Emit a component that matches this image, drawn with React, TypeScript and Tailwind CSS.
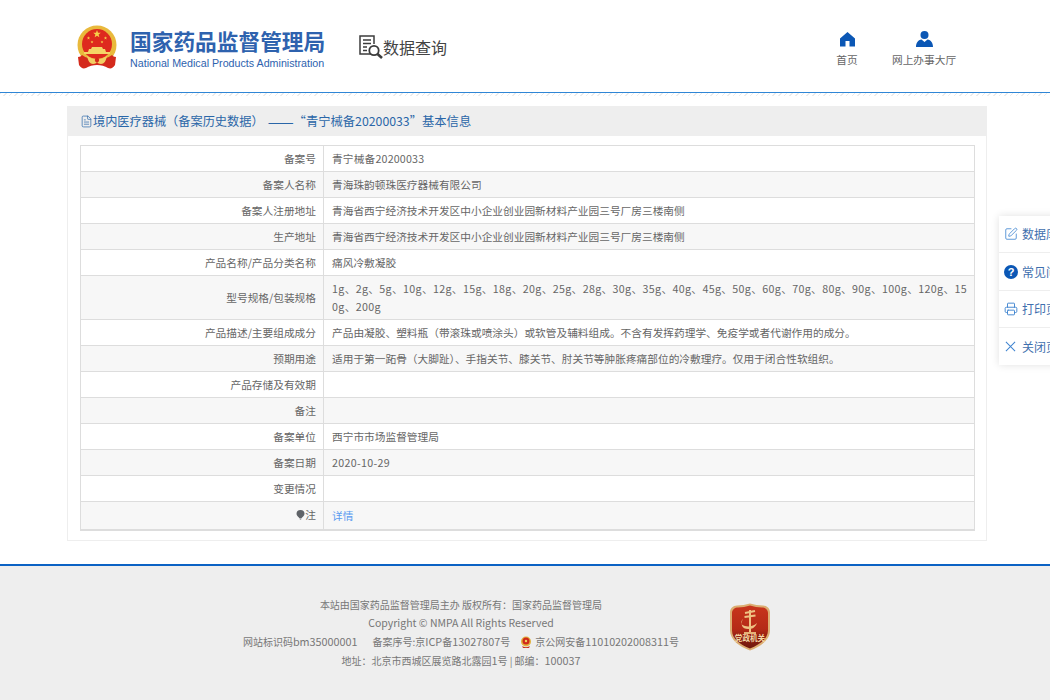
import React from "react";
import { SquarePen, Printer, FileText } from "lucide-react";

const CJK = '"Noto Sans CJK SC", "Liberation Sans", sans-serif';

function Latin({ text, cls }: { text: string; cls: string }) {
  const parts = text.split(/([0-9A-Za-z\-]+)/);
  return (
    <>
      {parts.map((p, i) => (i % 2 ? <span key={i} className={cls}>{p}</span> : <React.Fragment key={i}>{p}</React.Fragment>))}
    </>
  );
}

const rows: [string, string, string?, string?][] = [
  ["备案号", "青宁械备20200033", undefined, "tracking-[0.17px]"],
  ["备案人名称", "青海珠韵顿珠医疗器械有限公司"],
  ["备案人注册地址", "青海省西宁经济技术开发区中小企业创业园新材料产业园三号厂房三楼南侧"],
  ["生产地址", "青海省西宁经济技术开发区中小企业创业园新材料产业园三号厂房三楼南侧"],
  ["产品名称/产品分类名称", "痛风冷敷凝胶"],
  ["型号规格/包装规格", "1g、2g、5g、10g、12g、15g、18g、20g、25g、28g、30g、35g、40g、45g、50g、60g、70g、80g、90g、100g、120g、150g、200g", "h-[44px]", "tracking-[0.34px]"],
  ["产品描述/主要组成成分", "产品由凝胶、塑料瓶（带滚珠或喷涂头）或软管及辅料组成。不含有发挥药理学、免疫学或者代谢作用的成分。"],
  ["预期用途", "适用于第一跖骨（大脚趾）、手指关节、膝关节、肘关节等肿胀疼痛部位的冷敷理疗。仅用于闭合性软组织。"],
  ["产品存储及有效期", ""],
  ["备注", ""],
  ["备案单位", "西宁市市场监督管理局"],
  ["备案日期", "2020-10-29", undefined, "tracking-[0.3px]"],
  ["变更情况", ""],
];

function Star({ x, y, r }: { x: number; y: number; r: number }) {
  const pts = Array.from({ length: 10 }, (_, i) => {
    const a = -Math.PI / 2 + (i * Math.PI) / 5;
    const q = i % 2 ? r * 0.42 : r;
    return `${(x + q * Math.cos(a)).toFixed(2)},${(y + q * Math.sin(a)).toFixed(2)}`;
  }).join(" ");
  return <polygon points={pts} fill="#f6d14a" />;
}

function Emblem() {
  return (
    <svg width="40" height="45" viewBox="0 0 40 45">
      <circle cx="20" cy="20" r="19.500" fill="#e9b93c" />
      <circle cx="20" cy="19" r="15" fill="#de2a1e" />
      <Star x={20} y={9} r={4} />
      <Star x={11.500} y={13} r={1.700} />
      <Star x={15} y={17} r={1.500} />
      <Star x={25} y={17} r={1.500} />
      <Star x={28.500} y={13} r={1.700} />
      <path d="M7 29v-2h4l1-3h2l1-2h10l1 2h2l1 3h4v2z" fill="#f5d566" />
      <path d="M1 32c2 0 3-1 4-2 4 3 9 4 15 4s11-1 15-4c1 1 2 2 4 2l-1 8c-2 3-4 4-7 3-3-2-7-3-11-3s-8 1-11 3c-3 1-5 0-7-3z" fill="#d42a1c" />
      <path d="M10 31c3 2 6 3 10 3s7-1 10-3c-1 5-3 8-6 8-2 0-3-1-4-2-1 1-2 2-4 2-3 0-5-3-6-8z" fill="#f2cf63" />
      <circle cx="20" cy="35" r="2.200" fill="#d42a1c" />
    </svg>
  );
}

function DocSearch() {
  return (
    <svg width="26" height="26" viewBox="0 0 26 26" fill="none" stroke="#3c3c3c" strokeWidth="1.500">
      <path d="M13 20H2V2h14v8" />
      <path d="M5 6h8M5 9.500h8M5 13h4M5 16.500h4" strokeWidth="1.400" />
      <circle cx="16" cy="16.500" r="4.700" strokeWidth="1.800" />
      <path d="M19.500 20l4.500 4" strokeWidth="2.600" />
    </svg>
  );
}

function Badge() {
  return (
    <svg width="42" height="48" viewBox="0 0 42 48">
      <defs>
        <linearGradient id="bd" x1="0" y1="0" x2="0" y2="1">
          <stop offset="0" stopColor="#c8351c" />
          <stop offset="0.55" stopColor="#b52a17" />
          <stop offset="0.75" stopColor="#8c1e10" />
          <stop offset="1" stopColor="#6f180d" />
        </linearGradient>
      </defs>
      <path d="M8 2.500c4 0 9-1 13-2 4 1 9 2 13 2 4 0 7 3 7 7v18c0 9-9 16-20 20C10 43.500 1 36.500 1 27.500v-18c0-4 3-7 7-7z" fill="#dcae72" />
      <path d="M9 4.500c4 0 8-1 12-2 4 1 8 2 12 2 3 0 6 2 6 5.500v17.500c0 8-8 14-18 18C11 41.500 3 35.500 3 27.500V10c0-3.500 3-5.500 6-5.500z" fill="url(#bd)" />
      <path d="M21 7v22M16 10l10-2M15.500 14l11-1.500" stroke="#eec283" strokeWidth="2" fill="none" />
      <path d="M14 16c-3 3-2 6 2 7 4 1 9 0 12-3-2 5-5 6-9 6-6 0-8-5-5-10z" fill="#eec283" />
      <path d="M15 30h12" stroke="#eec283" strokeWidth="1.800" />
      <text x="21" y="38" textAnchor="middle" fontSize="7.600" fontWeight="700" fill="#f3d9a6" style={{ fontFamily: CJK }}>党政机关</text>
    </svg>
  );
}

function Help() {
  return (
    <svg width="14" height="14" viewBox="0 0 14 14" className="shrink-0">
      <circle cx="7" cy="7" r="7" fill="#0b57b5" />
      <text x="7" y="11" textAnchor="middle" fontSize="11" fontWeight="700" fill="#fff" style={{ fontFamily: '"Liberation Sans", sans-serif' }}>?</text>
    </svg>
  );
}

function Bulb() {
  return (
    <svg width="9" height="10" viewBox="0 0 9 10" className="inline-block align-[-1px]">
      <path d="M4.500 0a4 4 0 0 1 4 4c0 2-2.500 3-3.200 4.500h-1.600C3 7 .5 6 .5 4a4 4 0 0 1 4-4z" fill="#5f6368" />
      <path d="M3.800 9.200h1.400v.8H3.800z" fill="#999" />
    </svg>
  );
}

const footLatin = "text-[10.800px]";

export default function App() {
  return (
    <div className="relative w-full h-[700px] overflow-hidden bg-white text-[10.700px] text-[#666]" style={{ fontFamily: CJK }}>
      <header className="h-[93px] border-b border-[#2f86d6] flex items-start">
        <div className="ml-[77px] mt-[25px]"><Emblem /></div>
        <div className="ml-[13px] mt-[26px] w-[200px]">
          <div className="text-[21.700px] leading-[30px] font-bold text-[#2e62ae] whitespace-nowrap">国家药品监督管理局</div>
          <div className="text-[10.700px] leading-[12px] mt-[1px] text-[#2e62ae] whitespace-nowrap" style={{ fontFamily: '"Liberation Sans", sans-serif' }}>National Medical Products Administration</div>
        </div>
        <div className="ml-[28px] mt-[34px] flex items-start">
          <DocSearch />
          <span className="text-[16px] leading-[26px] text-[#444] -ml-[1px]">数据查询</span>
        </div>
        <nav className="ml-[389px] mt-[31px] flex items-start">
          <div className="flex flex-col items-center w-[22px]">
            <svg width="17" height="16" viewBox="0 0 17 16"><path d="M8.500 1L1 7.500V15.500h5.500V10h4v5.500H16V7.500z" fill="#0b57b5" /></svg>
            <span className="mt-[6px] leading-[14px] whitespace-nowrap text-[#666]">首页</span>
          </div>
          <div className="flex flex-col items-center w-[64px] ml-[34px]">
            <svg width="17" height="16" viewBox="0 0 17 16"><circle cx="8.500" cy="4" r="4" fill="#0b57b5" /><path d="M0 16c0-4 2-7 5.500-7.500l3 2.500 3-2.500C15 9 17 12 17 16z" fill="#0b57b5" /></svg>
            <span className="mt-[6px] leading-[14px] whitespace-nowrap text-[#666]">网上办事大厅</span>
          </div>
        </nav>
      </header>
      <div className="h-[3px] bg-[repeating-linear-gradient(135deg,#ececec_0,#ececec_1px,transparent_1px,transparent_4px)]" />

      <main className="ml-[67px] mt-[10px] w-[920px] h-[435px] border border-[#eee]">
        <div className="h-[29px] bg-[#eeeeee] pl-[12px] flex items-center text-[12.300px] text-[#2a66a8] whitespace-nowrap">
          <FileText size={13} strokeWidth={1.300} className="shrink-0" />
          <span className="text-[12.200px]">境内医疗器械（备案历史数据）</span>
          <span className="text-[15.500px] leading-none ml-[4px]">——</span>
          <span>“青宁械备20200033”基本信息</span>
        </div>
        <table className="ml-[12px] mt-[9px] w-[895px] border-collapse table-fixed border border-[#ddd] border-b-2">
          <colgroup><col className="w-[243px]" /><col /></colgroup>
          <tbody>
            {rows.map(([k, v, h, t], i) => (
              <tr key={k} className={`${h ?? "h-[26px]"} ${i % 2 ? "bg-[#f7f7f7]" : "bg-white"}`}>
                <td className="border border-[#ddd] text-right pr-[7px] leading-[14px]">{k}</td>
                <td className={`border border-[#ddd] pl-[8px] pr-[6px] leading-[18px] break-all ${t ?? ""}`}>{v}</td>
              </tr>
            ))}
            <tr className="h-[28px] bg-[#f7f7f7]">
              <td className="border border-[#ddd] text-right pr-[7px]"><Bulb />注</td>
              <td className="border border-[#ddd] pl-[8px] pt-[2px] text-[#5a9bf0]">详情</td>
            </tr>
          </tbody>
        </table>
      </main>

      <footer className="mt-[23px] h-[136px] bg-[#eeeeee] border-t-2 border-[#0b62c4] flex items-start">
        <div className="ml-[242px] mt-[30px] w-[438px] text-center text-[#777] text-[10px] leading-[18.300px] whitespace-nowrap">
          <div className="h-[18.300px]">本站由国家药品监督管理局主办 版权所有：国家药品监督管理局</div>
          <div className="h-[18.300px] text-[10.500px]">Copyright © NMPA All Rights Reserved</div>
          <div className="h-[18.300px] flex justify-center items-center">
            <span><Latin text="网站标识码bm35000001" cls={footLatin} /></span>
            <span className="ml-[15px]"><Latin text="备案序号:京ICP备13027807号" cls={footLatin} /></span>
            <span className="ml-[10px] mr-[3px]">
              <svg width="12" height="12" viewBox="0 0 12 12" className="block">
                <circle cx="6" cy="5.500" r="5" fill="#e2b13c" />
                <circle cx="6" cy="5" r="3.500" fill="#d0291c" />
                <path d="M2 10c2 1.500 6 1.500 8 0l-1 2H3z" fill="#c8341f" />
                <circle cx="6" cy="5" r="1.200" fill="#f0d060" />
              </svg>
            </span>
            <span><Latin text="京公网安备11010202008311号" cls={footLatin} /></span>
          </div>
          <div className="h-[18.300px]"><Latin text="地址：北京市西城区展览路北露园1号 | 邮编：100037" cls={footLatin} /></div>
        </div>
        <div className="ml-[49px] mt-[37px]"><Badge /></div>
      </footer>

      <aside className="absolute left-[999px] top-[216px] w-[120px] h-[149px] bg-white shadow-[0_0_8px_rgba(0,0,0,0.12)] text-[#3f6fae] text-[12px] whitespace-nowrap flex flex-col divide-y divide-[#eee]">
        <div className="h-[37px] flex items-center pl-[5px] gap-[4px]"><SquarePen size={14} strokeWidth={1.400} color="#3f84d0" />数据库</div>
        <div className="h-[38px] flex items-center pl-[5px] gap-[4px]"><Help />常见问题</div>
        <div className="h-[37px] flex items-center pl-[5px] gap-[4px]"><Printer size={14} strokeWidth={1.600} color="#3f84d0" />打印页面</div>
        <div className="h-[37px] flex items-center pl-[6px] gap-[6px]">
          <svg width="11" height="11" viewBox="0 0 12 12" stroke="#3f84d0" strokeWidth="1.100" fill="none"><path d="M1 1l10 10M11 1L1 11" /></svg>
          关闭页面
        </div>
      </aside>
    </div>
  );
}
